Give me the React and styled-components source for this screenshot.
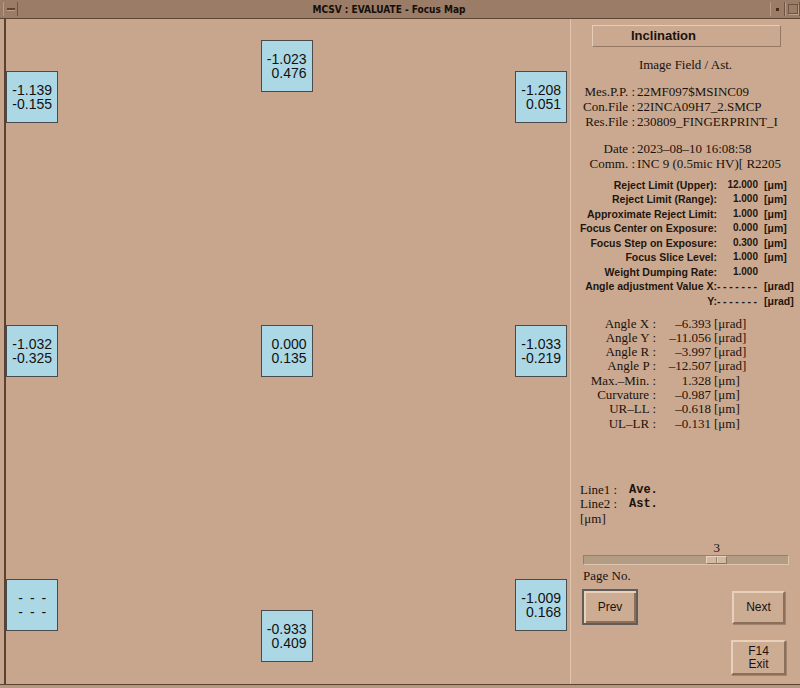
import React from 'react';
import styled, { createGlobalStyle } from 'styled-components';

const mapColumns = [
    { side: 'left', cells: [['-1.139', '-0.155'], ['-1.032', '-0.325'], null] },
    { side: 'center', cells: [['-1.023', '0.476'], ['0.000', '0.135'], ['-0.933', '0.409']] },
    { side: 'right', cells: [['-1.208', '0.051'], ['-1.033', '-0.219'], ['-1.009', '0.168']] },
];

const infoRows = [
    ['Mes.P.P. :', '22MF097$MSINC09'],
    ['Con.File :', '22INCA09H7_2.SMCP'],
    ['Res.File :', '230809_FINGERPRINT_I'],
];

const limitRows = [
    ['Reject Limit (Upper):', '12.000', '[μm]'],
    ['Reject Limit (Range):', '1.000', '[μm]'],
    ['Approximate Reject Limit:', '1.000', '[μm]'],
    ['Focus Center on Exposure:', '0.000', '[μm]'],
    ['Focus Step on Exposure:', '0.300', '[μm]'],
    ['Focus Slice Level:', '1.000', '[μm]'],
    ['Weight Dumping Rate:', '1.000', ''],
    ['Angle adjustment Value X:', null, '[μrad]'],
    ['Y:', null, '[μrad]'],
];

const angleRows = [
    ['Angle X :', '–6.393', '[μrad]'],
    ['Angle Y :', '–11.056', '[μrad]'],
    ['Angle R :', '–3.997', '[μrad]'],
    ['Angle P :', '–12.507', '[μrad]'],
    ['Max.–Min. :', '1.328', '[μm]'],
    ['Curvature :', '–0.987', '[μm]'],
    ['UR–LL :', '–0.618', '[μm]'],
    ['UL–LR :', '–0.131', '[μm]'],
];

const page = 3;
const pageCount = 4;

function App () {
    const ratio = (page - 1) / (pageCount - 1);

    return (
        <>
        <GlobalStyle />
        <Window>
            <TitleBar>
                <FrameButton><Dash /></FrameButton>
                <Title>MCSV : EVALUATE - Focus Map</Title>
                <FrameButton><Dot /></FrameButton>
                <FrameButton><Square /></FrameButton>
            </TitleBar>
            <Body>
                <MapArea>
                    {mapColumns.map(col => (
                        <MapColumn key={col.side} $side={col.side}>
                            {col.cells.map((cell, i) => (
                                <Cell key={i} $empty={!cell}>
                                    {cell ? cell.map(v => <div key={v}>{v}</div>) : (
                                        <>
                                        <div>- - -</div>
                                        <div>- - -</div>
                                        </>
                                    )}
                                </Cell>
                            ))}
                        </MapColumn>
                    ))}
                </MapArea>
                <Panel>
                    <Header>Inclination</Header>
                    <SubTitle>Image Field / Ast.</SubTitle>
                    <InfoGrid $top={12}>
                        {infoRows.map(([k, v]) => (
                            <React.Fragment key={k}>
                                <InfoLabel>{k}</InfoLabel>
                                <span>{v}</span>
                            </React.Fragment>
                        ))}
                    </InfoGrid>
                    <InfoGrid $top={12}>
                        <InfoLabel>Date :</InfoLabel>
                        <span>2023–08–10 16:08:58</span>
                        <InfoLabel>Comm. :</InfoLabel>
                        <span>INC 9 (0.5mic HV)[ R2205</span>
                    </InfoGrid>
                    <LimitGrid>
                        {limitRows.map(([k, v, u]) => (
                            <React.Fragment key={k}>
                                <LimitLabel>{k}</LimitLabel>
                                {v === null ? <Dashes>-------</Dashes> : <LimitValue>{v}</LimitValue>}
                                <LimitUnit>{u}</LimitUnit>
                            </React.Fragment>
                        ))}
                    </LimitGrid>
                    <AngleGrid>
                        {angleRows.map(([k, v, u]) => (
                            <React.Fragment key={k}>
                                <AngleLabel>{k}</AngleLabel>
                                <AngleValue>{v}</AngleValue>
                                <span>{u}</span>
                            </React.Fragment>
                        ))}
                    </AngleGrid>
                    <LegendGrid>
                        <span>Line1 :</span>
                        <Mono>Ave.</Mono>
                        <span>Line2 :</span>
                        <Mono>Ast.</Mono>
                        <span>[μm]</span>
                    </LegendGrid>
                    <Slider>
                        <SliderValue style={{ left: `calc(${ratio} * (100% - 21px) + 10.5px)` }}>{page}</SliderValue>
                        <Track>
                            <Thumb style={{ left: `calc(${ratio} * (100% - 21px))` }} />
                        </Track>
                    </Slider>
                    <PageLabel>Page No.</PageLabel>
                    <ButtonRow>
                        <PanelButton $default $w={56} $h={36}>Prev</PanelButton>
                        <PanelButton $w={53} $h={33}>Next</PanelButton>
                    </ButtonRow>
                    <ExitRow>
                        <PanelButton $w={55} $h={35}>F14<br />Exit</PanelButton>
                    </ExitRow>
                </Panel>
            </Body>
            <BottomFrame />
        </Window>
        </>
    )

}

const GlobalStyle = createGlobalStyle`
  html, body {
    margin : 0;
    padding : 0;
  }
  body {
    width : 800px;
    height : 688px;
    overflow : hidden;
    background : #c8a68d;
  }
`

const Window = styled.div`
  width : 800px;
  height : 688px;
  display : flex;
  flex-direction : column;
  background : #c8a68d;
  color : #1a120c;
`
const TitleBar = styled.div`
  height : 18px;
  flex-shrink : 0;
  display : flex;
  align-items : center;
  background : #9a7c67;
  border-bottom : 1px solid #5d4535;
  padding-left : 3px;
`
const Title = styled.div`
  flex : 1;
  text-align : center;
  font-family : "DejaVu Sans Condensed", "Liberation Sans Narrow", "Liberation Sans", sans-serif;
  font-size : 10px;
  font-weight : bold;
  padding-right : 10px;
  color : #160e08;
`
const FrameButton = styled.div`
  width : 13px;
  height : 14px;
  display : flex;
  align-items : center;
  justify-content : center;
  border-left : 1px solid #b89a85;
  border-right : 1px solid #6e5442;
`
const Dash = styled.div`
  width : 8px;
  height : 2px;
  background : #5d4535;
  border-bottom : 1px solid #c0a28c;
`
const Dot = styled.div`
  width : 3px;
  height : 3px;
  background : #3e2e22;
`
const Square = styled.div`
  width : 8px;
  height : 8px;
  border : 1px solid #6e5442;
  box-shadow : 1px 1px 0 #bda08a;
`
const Body = styled.div`
  flex : 1;
  display : flex;
  min-height : 0;
`
const BottomFrame = styled.div`
  height : 3px;
  flex-shrink : 0;
  border-top : 1px solid #5a4233;
  background : #b7987f;
`
const MapArea = styled.div`
  width : 561px;
  margin-left : 4px;
  border-left : 2px solid #5a4233;
  padding-right : 3px;
  display : flex;
  justify-content : space-between;
`
const MapColumn = styled.div`
  display : flex;
  flex-direction : column;
  justify-content : space-between;
  padding-top : ${p => p.$side === 'center' ? 21 : 52}px;
  padding-bottom : ${p => p.$side === 'center' ? 22 : 53}px;
`
const Cell = styled.div`
  width : 52px;
  height : 52px;
  box-sizing : border-box;
  border : 1px solid #4a4a4a;
  background : #acd8e6;
  display : flex;
  flex-direction : column;
  justify-content : center;
  align-items : ${p => p.$empty ? 'center' : 'flex-end'};
  padding-right : ${p => p.$empty ? 0 : 5}px;
  padding-left : ${p => p.$empty ? 2 : 0}px;
  font-family : "Liberation Sans", Arial, sans-serif;
  font-size : 14px;
  line-height : 14px;
  letter-spacing : ${p => p.$empty ? '1.5px' : '0'};
  color : #111;
`
const Panel = styled.div`
  flex : 1;
  border-left : 1px solid #e0c6b0;
  background : #cba990;
  display : flex;
  flex-direction : column;
  font-family : "Liberation Serif", "Times New Roman", serif;
  font-size : 13px;
  line-height : 15px;
`
const Header = styled.div`
  margin : 6px 0 0 21px;
  width : 189px;
  height : 22px;
  box-sizing : border-box;
  border : 1px solid;
  border-color : #e6cdb8 #947863 #947863 #e6cdb8;
  padding-left : 38px;
  font-family : "Liberation Sans", Arial, sans-serif;
  font-weight : bold;
  font-size : 13px;
  line-height : 20px;
`
const SubTitle = styled.div`
  margin-top : 9.5px;
  text-align : center;
`
const InfoGrid = styled.div`
  margin-top : ${p => p.$top}px;
  display : grid;
  grid-template-columns : 64px auto;
  column-gap : 2px;
  white-space : nowrap;
`
const InfoLabel = styled.span`
  text-align : right;
`
const LimitGrid = styled.div`
  margin-top : 7px;
  display : grid;
  grid-template-columns : 146px 41px auto;
  font-family : "Liberation Sans", Arial, sans-serif;
  font-weight : bold;
  font-size : 10.5px;
  line-height : 14.5px;
  white-space : nowrap;
  color : #21160e;
`
const LimitLabel = styled.span`
  text-align : right;
`
const LimitValue = styled.span`
  text-align : right;
  font-size : 10px;
`
const Dashes = styled.span`
  letter-spacing : 2.6px;
  text-align : left;
`
const LimitUnit = styled.span`
  padding-left : 6px;
`
const AngleGrid = styled.div`
  margin-top : 8.5px;
  display : grid;
  grid-template-columns : 85px 58px auto;
  line-height : 14.3px;
  white-space : nowrap;
`
const AngleLabel = styled.span`
  text-align : right;
`
const AngleValue = styled.span`
  text-align : right;
  padding-right : 3px;
`
const LegendGrid = styled.div`
  margin : 52px 0 0 9px;
  display : grid;
  grid-template-columns : 49px auto;
  line-height : 14.5px;
`
const Mono = styled.span`
  font-family : "Liberation Mono", "Courier New", monospace;
  font-weight : bold;
  font-size : 12px;
`
const Slider = styled.div`
  position : relative;
  margin : 15px 11px 0 12px;
  padding-top : 14px;
`
const SliderValue = styled.span`
  position : absolute;
  top : 0;
  transform : translateX(-50%);
  line-height : 14px;
`
const Track = styled.div`
  position : relative;
  height : 10px;
  box-sizing : border-box;
  background : #b39c84;
  border : 1px solid;
  border-color : #95806b #dcc4ae #dcc4ae #95806b;
`
const Thumb = styled.div`
  position : absolute;
  top : 0;
  width : 21px;
  height : 8px;
  box-sizing : border-box;
  background : linear-gradient(to right, transparent 9px, #9e8570 9px, #9e8570 10px, #e4ccb7 10px, #e4ccb7 11px, transparent 11px), #d2b9a3;
  border : 1px solid;
  border-color : #ead4c0 #8d735f #8d735f #ead4c0;
`
const PageLabel = styled.div`
  margin : 2.5px 0 0 12px;
`
const ButtonRow = styled.div`
  margin-top : 6.5px;
  padding : 0 15px 0 11px;
  display : flex;
  justify-content : space-between;
  align-items : center;
`
const ExitRow = styled.div`
  margin-top : 15px;
  padding-right : 14px;
  display : flex;
  justify-content : flex-end;
`
const PanelButton = styled.button`
  width : ${p => p.$w}px;
  height : ${p => p.$h}px;
  box-sizing : border-box;
  padding : 0;
  background : #cdac94;
  border : 2px solid;
  border-color : ${p => p.$default ? '#5f5c5a' : '#e8d0bb #8b6f5b #8b6f5b #e8d0bb'};
  box-shadow : ${p => p.$default ? 'inset 2px 2px 0 #e8d0bb, inset -2px -2px 0 #8b6f5b' : '1px 1px 0 #a08470'};
  font-family : "Liberation Sans", Arial, sans-serif;
  font-size : 12px;
  line-height : 13px;
  color : #1a120c;
`

export default App;
